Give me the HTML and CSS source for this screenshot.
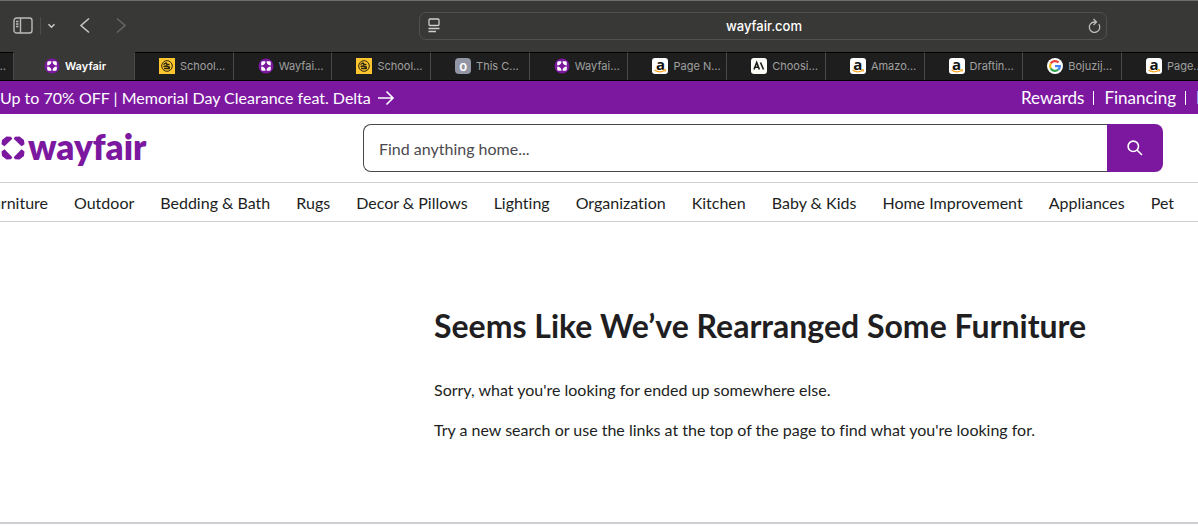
FILE: index.html
```
<!DOCTYPE html>
<html lang="en">
<head>
<meta charset="utf-8">
<title>Wayfair</title>
<link rel="stylesheet" href="styles.css">
</head>
<body>
<svg class="sprite" aria-hidden="true">
  <symbol id="wf" viewBox="0 0 16 16">
    <circle cx="8" cy="8" r="7.5" fill="#7b189f"/>
    <path fill="#fff" d="M4.200 3.200h3l.3.800-.7 1.700-1.100 1.100-1.700.7-.8-.3v-3zM8.800 3.200h3l1 1v3l-.8.300-1.700-.7-1.100-1.100-.7-1.700zM3.200 8.800l.8-.3 1.700.7 1.100 1.100.7 1.700-.3.800h-3l-1-1zM12.800 8.800v3l-1 1h-3l-.3-.8.700-1.700 1.100-1.100 1.700-.7z"/>
  </symbol>
  <symbol id="school" viewBox="0 0 16 16">
    <path fill="#fdc62f" d="M0 0h16v16H0z"/>
    <circle cx="8" cy="8" r="5.300" fill="none" stroke="#2a2410"/>
    <path d="M4.500 6.500 7 5l1 1.500h2.500M4.500 8.500l3-.5 3.500 1.500M5 10.500h6" fill="none" stroke="#2a2410" stroke-width="1.400"/>
  </symbol>
  <symbol id="smile" viewBox="0 0 16 16">
    <path d="M2.500 12q5 3.300 10 .5" fill="none" stroke="#f8a11b" stroke-width="1.300"/>
    <path d="m11.300 11.800 2.300-.2-.5 2.200" fill="none" stroke="#f8a11b"/>
  </symbol>
  <symbol id="ai" viewBox="0 0 16 16">
    <rect width="16" height="16" rx="3" fill="#fcfcf7"/>
    <path d="m3 11.500 2.700-7 2.700 7M4 9.300h3.500M9.500 4.500l3 7" fill="none" stroke="#1b1b18" stroke-width="1.600"/>
  </symbol>
  <symbol id="google" viewBox="0 0 16 16">
    <circle cx="8" cy="8" r="8" fill="#fff"/>
    <g fill="none" stroke-width="2.200">
      <path stroke="#ea4335" d="M3.700 5.600A4.900 4.900 0 0 1 11.500 4.500"/>
      <path stroke="#fbbc05" d="M3.700 10.400a4.900 4.900 0 0 1 0-4.800"/>
      <path stroke="#34a853" d="M11.200 11.700A4.900 4.900 0 0 1 3.700 10.400"/>
      <path stroke="#4285f4" d="M8 8.200h4.900a4.700 4.700 0 0 1-1.700 3.500"/>
    </g>
  </symbol>
</svg>

<header class="browser">
  <div class="toolbar">
    <div class="tools">
      <button class="tool" aria-label="Sidebar"><svg width="20" height="17" viewBox="0 0 20 17" fill="none" stroke="#bababa" stroke-width="1.400"><rect x="1" y="1" width="18" height="15" rx="2.500"/><path d="M7.500 1v15M3 4.500h2.500M3 7h2.500M3 9.500h2.500"/></svg></button>
      <span class="tool-rule"></span>
      <button class="tool tool-menu" aria-label="Tab groups"><svg width="9" height="6" viewBox="0 0 9 6" fill="none" stroke="#c8c8c8" stroke-width="1.600"><path d="m1.500 1.200 3 3 3-3"/></svg></button>
      <button class="tool tool-back" aria-label="Back"><svg width="12" height="17" viewBox="0 0 12 17" fill="none" stroke="#c6c6c6" stroke-width="1.600"><path d="M10 1.500 2 8.500l8 7"/></svg></button>
      <button class="tool tool-next" aria-label="Forward" disabled><svg width="12" height="17" viewBox="0 0 12 17" fill="none" stroke="#666664" stroke-width="1.600"><path d="m2 1.500 8 7-8 7"/></svg></button>
    </div>
    <div class="address">
      <button class="tool" aria-label="Reader"><svg width="12" height="15" viewBox="0 0 12 15" fill="none" stroke="#cfcfcf" stroke-width="1.300"><rect x="1" y="1" width="10" height="6.500" rx="1"/><path d="M.500 10.500h11M.500 13.500h7.500"/></svg></button>
      <span class="host">wayfair.com</span>
      <button class="tool" aria-label="Reload"><svg width="13" height="16" viewBox="0 0 13 16" fill="none" stroke="#bcbcbc" stroke-width="1.300"><path d="M10.800 6.200A5.200 5.200 0 1 1 6.500 4h1.300M5.500 1l3 3-3 3"/></svg></button>
    </div>
  </div>
  <nav class="tabs" aria-label="Tabs">
    <a class="tab tab-cut" href="#">…</a>
    <a class="tab tab-active" href="#"><svg class="fav"><use href="#wf"/></svg>Wayfair</a>
    <a class="tab" href="#"><svg class="fav"><use href="#school"/></svg>School…</a>
    <a class="tab" href="#"><svg class="fav"><use href="#wf"/></svg>Wayfai…</a>
    <a class="tab" href="#"><svg class="fav"><use href="#school"/></svg>School…</a>
    <a class="tab" href="#"><span class="fav fav-o">o</span>This C…</a>
    <a class="tab" href="#"><svg class="fav"><use href="#wf"/></svg>Wayfai…</a>
    <a class="tab" href="#"><span class="fav fav-a">a<svg><use href="#smile"/></svg></span>Page N…</a>
    <a class="tab" href="#"><svg class="fav"><use href="#ai"/></svg>Choosi…</a>
    <a class="tab" href="#"><span class="fav fav-a">a<svg><use href="#smile"/></svg></span>Amazo…</a>
    <a class="tab" href="#"><span class="fav fav-a">a<svg><use href="#smile"/></svg></span>Draftin…</a>
    <a class="tab" href="#"><svg class="fav"><use href="#google"/></svg>Bojuzij…</a>
    <a class="tab" href="#"><span class="fav fav-a">a<svg><use href="#smile"/></svg></span>Page…</a>
  </nav>
</header>

<div class="promo">
  <a class="promo-deal" href="#">Up to 70% OFF | Memorial Day Clearance feat. Delta
    <svg width="18" height="16" viewBox="0 0 18 16" fill="none" stroke="#fff" stroke-width="1.600"><path d="M1 8h15M9.500 1.500 16 8l-6.500 6.500"/></svg></a>
  <div class="promo-links">
    <a href="#">Rewards</a><a href="#">Financing</a><a class="promo-last" href="#">P</a>
  </div>
</div>

<div class="masthead">
  <a class="logo" href="#" aria-label="Wayfair">
    <svg width="26" height="26" viewBox="0 0 26 26" fill="#7b189f"><path d="M6.500 1.500 11 1.800 12.300 3.800 4.500 11.300 1.500 9.200 2 5zM19.500 1.500l4.500 3.500.5 4.200-3 2.100L13.700 3.800 15 1.800zM4.500 14.200l7.800 8-1.300 2-4.500.4L2 21l-.5-4.600zM21.500 14.200l3 2.200L24 21l-4.500 3.600-4.500-.4-1.300-2z"/></svg>
    <span>wayfair</span>
  </a>
  <form class="search">
    <input type="text" placeholder="Find anything home..." aria-label="Find anything home">
    <button type="button" aria-label="Search"><svg width="16" height="16" viewBox="0 0 16 16" fill="none" stroke="#fff" stroke-width="1.600"><circle cx="6.300" cy="6.300" r="5.200"/><path d="m10 10 5 5"/></svg></button>
  </form>
</div>

<nav class="departments" aria-label="Departments">
  <a class="dept-cut" href="#">Furniture</a>
  <a href="#">Outdoor</a>
  <a href="#">Bedding &amp; Bath</a>
  <a href="#">Rugs</a>
  <a href="#">Decor &amp; Pillows</a>
  <a href="#">Lighting</a>
  <a href="#">Organization</a>
  <a href="#">Kitchen</a>
  <a href="#">Baby &amp; Kids</a>
  <a href="#">Home Improvement</a>
  <a href="#">Appliances</a>
  <a href="#">Pet</a>
</nav>

<main class="message">
  <h1>Seems Like We’ve Rearranged Some Furniture</h1>
  <p>Sorry, what you're looking for ended up somewhere else.</p>
  <p>Try a new search or use the links at the top of the page to find what you're looking for.</p>
</main>
<footer class="footer"></footer>
</body>
</html>
```
FILE: styles.css
```
* { box-sizing: border-box; }
body {
  margin: 0;
  overflow-x: hidden;
  background: #fff;
  color: #211e22;
  font: 16px/24px Lato, sans-serif;
  font-variant-ligatures: none;
}
a { color: inherit; text-decoration: none; white-space: nowrap; }
button { border: 0; padding: 0; background: none; font: inherit; }
svg { display: block; flex: none; }
.sprite { position: absolute; width: 0; height: 0; }

.browser { font-family: Inter, sans-serif; border-bottom: 1px solid #000; background: #383836; }
.toolbar {
  display: grid;
  grid-template-columns: 419px 1fr;
  align-items: center;
  height: 52px;
  padding: 0 91px 2px 0;
  border-top: 1px solid #6c6e6b;
}
.tools { display: flex; align-items: center; padding-left: 13px; }
.tool-rule { width: 1px; height: 18px; margin-left: 7px; background: #4c4c4a; }
.tool-menu { margin-left: 6px; }
.tool-back { margin-left: 23px; }
.tool-next { margin-left: 24px; }
.address {
  display: flex;
  align-items: center;
  justify-content: space-between;
  height: 28px;
  padding: 0 5px 0 8px;
  border: 1px solid #51514f;
  border-radius: 7px;
}
.host { color: #fff; font-size: 13px; font-weight: 500; }

.tabs {
  display: grid;
  grid-template-columns: 14px 121px repeat(10, minmax(0, 1fr)) 76px;
  height: 28px;
  overflow: hidden;
}
.tab {
  display: flex;
  align-items: center;
  gap: 5px;
  padding: 0 0 2px 24px;
  border-top: 1px solid #000;
  border-right: 1px solid #4a4a4a;
  background: #1e1e1e;
  color: #a0a0a0;
  font-size: 11px;
  line-height: 16px;
}
.tab-cut { justify-content: flex-end; padding: 0 7px 2px 0; }
.tab-active { padding-left: 30px; border-top-color: #383836; background: #383836; color: #fff; font-weight: 600; }
.tab:last-child { border-right: 0; }
.fav { flex: none; width: 16px; height: 16px; text-align: center; }
.fav-o { border-radius: 4px; background: #9295a3; color: #fff; font-size: 13px; font-weight: 600; }
.fav-a {
  position: relative;
  border-radius: 3px;
  background: #fff;
  color: #111;
  font: 700 15px/12px "Open Sans", sans-serif;
}
.fav-a svg { position: absolute; inset: 0; width: 16px; height: 16px; }

.promo {
  display: flex;
  justify-content: space-between;
  align-items: center;
  height: 33px;
  overflow: hidden;
  background: #7b189f;
  color: #fff;
}
.promo-deal { display: flex; align-items: center; gap: 6px; }
.promo-links { display: flex; align-items: center; font-size: 17px; }
.promo-links a + a { display: flex; align-items: center; }
.promo-links a + a::before { content: ""; flex: none; width: 1px; height: 14px; margin: 0 10px 0 9px; background: #fff; }
.promo-links .promo-last { flex: none; width: 22px; overflow: hidden; }

.masthead {
  display: grid;
  grid-template-columns: 363px 1fr;
  align-items: center;
  height: 68px;
  padding-right: 35px;
}
.logo { display: flex; align-items: center; gap: 2px; color: #7b189f; font-size: 35px; font-weight: 800; line-height: 36px; }
.logo span { padding-bottom: 5px; }
.search { display: flex; height: 48px; }
.search input {
  flex: 1;
  min-width: 0;
  padding: 2px 15px 0;
  border: 1px solid #49464c;
  border-right: 0;
  border-radius: 8px 0 0 8px;
  background: #fff;
  color: #211e22;
  font: inherit;
}
.search input::placeholder { color: #4b494e; opacity: 1; }
.search button {
  display: grid;
  place-items: center;
  width: 56px;
  border-radius: 0 8px 8px 0;
  background: #7b189f;
}

.departments {
  display: flex;
  gap: 26px;
  height: 40px;
  border: solid #d0d0d0;
  border-width: 1px 0;
  line-height: 40px;
  overflow: hidden;
}
.departments a { flex: none; }
.dept-cut { display: flex; justify-content: flex-end; width: 48px; overflow: hidden; }

.message { padding: 84px 0 64px 434px; }
.message h1 { margin: 0 0 32px; font-size: 32px; line-height: 40px; }
.message p { margin: 0 0 16px; }
.footer { border-top: 2px solid #d0ced3; }
```
